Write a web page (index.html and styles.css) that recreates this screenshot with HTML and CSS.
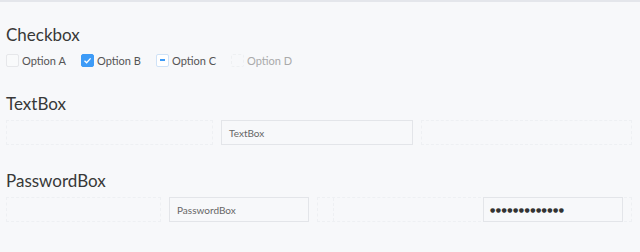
FILE: index.html
```html
<!DOCTYPE html>
<html lang="en">
<head>
<meta charset="UTF-8">
<title>Controls</title>
<link rel="stylesheet" href="styles.css">
</head>
<body>

<div class="page">
  <!-- Checkbox -->
  <h2 class="title title-first">Checkbox</h2>
  <div class="check-row">
    <label class="check"><span class="box"></span>Option A</label>
    <label class="check"><span class="box box-on">
      <svg width="9" height="9" viewBox="0 0 9 9"><path d="M1.5 4.8 L3.6 6.8 L7.6 2.4" fill="none" stroke="#fff" stroke-width="1.3"/></svg>
    </span>Option B</label>
    <label class="check"><span class="box box-mixed"><span class="dash"></span></span>Option C</label>
    <label class="check check-off"><span class="box box-off"></span>Option D</label>
  </div>

  <!-- TextBox -->
  <h2 class="title">TextBox</h2>
  <div class="field-row">
    <div class="field field-dash tb1"></div>
    <div class="field tb2">TextBox</div>
    <div class="field field-dash tb3"></div>
  </div>

  <!-- PasswordBox -->
  <h2 class="title">PasswordBox</h2>
  <div class="field-row">
    <div class="field field-dash pb1"></div>
    <div class="field pb2">PasswordBox</div>
    <div class="field field-dash pb3">
      <div class="pb-inner"></div>
      <div class="pb-value"><span class="dots">●●●●●●●●●●●●●</span></div>
    </div>
  </div>

  <h2 class="title title-last">ComboBox</h2>
</div>

</body>
</html>
```

FILE: styles.css
```css
body {
  margin: 0;
  padding: 0;
  background: #f7f8fa;
  border-top: 2px solid #e4e6eb;
  font-family: Lato, "Noto Sans", sans-serif;
  color: #333;
  height: 250px;
  overflow: hidden;
}
.page {
  padding: 0 8px 0 6px;
}
.title {
  font-weight: normal;
  font-size: 17px;
  line-height: 20px;
  height: 20px;
  margin: 23px 0 6px;
  color: #383838;
}
.title-first {
  margin-top: 23px;
}
.title-last {
  margin-top: 0;
  padding-top: 2px;
}

/* checkboxes */
.check-row {
  display: flex;
  height: 18px;
  align-items: center;
  margin-bottom: 25px;
}
.check {
  display: flex;
  align-items: center;
  font-size: 11px;
  color: #555;
  width: 75px;
}
.check-off {
  color: #aaa;
}
.box {
  width: 13px;
  height: 13px;
  box-sizing: border-box;
  border: 1px solid #e6e7ea;
  background: #f9fafb;
  border-radius: 2px;
  margin-right: 3px;
  display: flex;
  align-items: center;
  justify-content: center;
}
.box-on {
  background: #3d9bf7;
  border-color: #3d9bf7;
}
.box-mixed {
  border-color: #cfe2f7;
  background: #fff;
}
.dash {
  width: 5px;
  height: 1.5px;
  background: #3d9bf7;
}
.box-off {
  border: 1px dashed #eef0f2;
  background: transparent;
}

/* text fields */
.field-row {
  display: flex;
  gap: 8px;
  margin-bottom: 26px;
}
.field {
  height: 25px;
  box-sizing: border-box;
  border: 1px solid #e3e5e9;
  background: #f7f8fa;
  font-size: 10px;
  color: #666;
  padding-left: 7px;
  display: flex;
  align-items: center;
}
.field-dash {
  border: 1px dashed #eef0f3;
}
.tb1 { width: 207px; }
.tb2 { width: 192px; }
.tb3 { flex: 1; }
.pb1 { width: 155px; }
.pb2 { width: 140px; }
.pb3 {
  flex: 1;
  padding-left: 15px;
  padding-right: 8px;
  align-items: stretch;
}
.pb-inner {
  width: 149px;
  border-left: 1px dashed #eef0f3;
}
.pb-value {
  flex: 1;
  border: 1px solid #e3e5e9;
  margin: -1px 0;
  display: flex;
  align-items: center;
  padding-left: 6px;
}
.dots {
  font-family: "DejaVu Sans", sans-serif;
  font-size: 6px;
  letter-spacing: 0.5px;
  color: #333;
}
```
